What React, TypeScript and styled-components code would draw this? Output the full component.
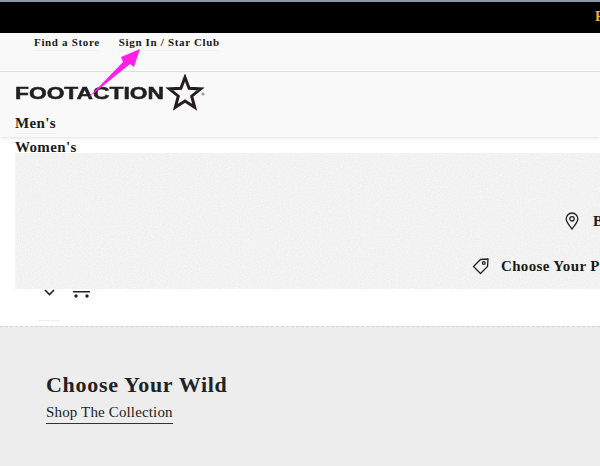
import styled, { createGlobalStyle } from "styled-components"

const GlobalStyle = createGlobalStyle`
  html, body {
    margin: 0;
    padding: 0;
    background: #fff;
    overflow: hidden;
  }

  body {
    font-family: "Liberation Serif", "Times New Roman", serif;
  }
`

const Page = styled.div`
  position: relative;
  width: 600px;
  height: 466px;
  overflow: hidden;
`

const PromoBar = styled.div`
  height: 31px;
  border-top: 2px solid #8b98a8;
  background: #000;
  color: #f5b818;
  font-size: 14px;
  font-weight: 700;
  line-height: 30px;
  padding-left: 595px;
  white-space: nowrap;
`

const Header = styled.header`
  background: #f9f9f9;
  box-shadow: 0 1px 3px rgba(0, 0, 0, 0.12);
`

const UtilityBar = styled.nav`
  display: flex;
  align-items: flex-start;
  gap: 19px;
  height: 39px;
  padding: 2px 0 0 34px;
  box-sizing: border-box;
  border-bottom: 1px solid #dedede;
`

const UtilityLink = styled.a`
  font-size: 11px;
  font-weight: 700;
  letter-spacing: 0.66px;
  line-height: 14px;
  color: #1a1a1a;
  padding-bottom: 1px;
  border-bottom: 1px solid #f0f0f0;
`

const LogoRow = styled.div`
  display: flex;
  align-items: center;
  height: 41px;
  padding-left: 15px;
`

const LogoText = styled.span`
  font-family: "Liberation Sans", Arial, sans-serif;
  font-size: 17px;
  font-weight: 700;
  line-height: 17px;
  color: #231f20;
  display: inline-block;
  width: 150px;
  white-space: nowrap;
  transform: scaleX(1.34);
  transform-origin: left center;
  -webkit-text-stroke: 0.5px #231f20;
  margin-top: 2px;
`

const NavLink = styled.a`
  display: inline-block;
  font-size: 15px;
  font-weight: 700;
  letter-spacing: 0.35px;
  line-height: 18px;
  color: #1a1a1a;
`

const NavRow = styled.div`
  height: 24px;
  padding: 1px 0 0 15px;
  box-sizing: border-box;

  ${NavLink} {
    border-bottom: 1px solid #efefef;
    padding-bottom: 1px;
  }
`

const WomenRow = styled.div`
  height: 22px;
  padding: 1px 0 0 15px;
  line-height: 18px;
`

const PickerPanel = styled.div`
  position: absolute;
  left: 15px;
  top: 153px;
  width: 585px;
  height: 136px;
  background-color: #efefef;
  overflow: hidden;
`

const Grain = styled.svg`
  position: absolute;
  inset: 0;
  width: 100%;
  height: 100%;
`

const PickerItem = styled.div<{ $left: number; $top: number }>`
  position: absolute;
  left: ${(p) => p.$left}px;
  top: ${(p) => p.$top}px;
  display: flex;
  align-items: center;
  font-size: 15px;
  font-weight: 700;
  letter-spacing: 0.35px;
  line-height: 18px;
  color: #1a1a1a;
  white-space: nowrap;
`

const PinIcon = styled.svg`
  width: 14px;
  height: 18px;
  margin-right: 14px;
`

const TagIcon = styled.svg`
  width: 18px;
  height: 18px;
  margin-right: 11px;
`

const IconRow = styled.div`
  display: flex;
  align-items: flex-start;
  gap: 18px;
  height: 30px;
  padding: 130px 0 0 44px;
`

const Chevron = styled.svg`
  width: 11px;
  height: 8px;
  margin-top: -1px;
`

const Cart = styled.svg`
  width: 18px;
  height: 18px;
`

const ThinRule = styled.div`
  width: 22px;
  height: 1px;
  margin: 0 0 5px 38px;
  background: #eee;
`

const Feature = styled.section`
  height: 141px;
  background: #ededed;
  border-top: 1px dashed #d2d2d2;
  padding: 45px 0 0 46px;
  box-sizing: border-box;
`

const FeatureTitle = styled.h2`
  margin: 0;
  font-size: 22px;
  font-weight: 700;
  letter-spacing: 0.7px;
  line-height: 26px;
  color: #222;
`

const FeatureLink = styled.a`
  display: inline-block;
  margin-top: 5px;
  font-size: 15px;
  letter-spacing: 0.15px;
  line-height: 18px;
  color: #222;
  padding-bottom: 2px;
  border-bottom: 1px solid #333;
`

const ArrowMark = styled.svg`
  position: absolute;
  left: 85px;
  top: 45px;
  width: 60px;
  height: 56px;
`

export default function App() {
  return (
    <Page>
      <GlobalStyle />
      <PromoBar>F</PromoBar>

      <Header>
        <UtilityBar>
          <UtilityLink>Find a Store</UtilityLink>
          <UtilityLink>Sign In / Star Club</UtilityLink>
        </UtilityBar>

        <LogoRow>
          <LogoText>FOOTACTION</LogoText>
          <svg width="42" height="38" viewBox="0 0 42 38">
            <path
              d="M20 3.5 L24.1 14.3 L35.7 14.9 L26.7 22.2 L29.7 33.3 L20 27 L10.3 33.3 L13.3 22.2 L4.3 14.9 L15.9 14.3 Z"
              fill="none"
              stroke="#231f20"
              strokeWidth="3"
            />
            <circle cx="38" cy="20" r="1.5" fill="#999" />
          </svg>
        </LogoRow>

        <NavRow>
          <NavLink>Men's</NavLink>
        </NavRow>
      </Header>

      <WomenRow>
        <NavLink>Women's</NavLink>
      </WomenRow>

      <PickerPanel>
        <Grain>
          <filter id="grain">
            <feTurbulence type="fractalNoise" baseFrequency="0.9" numOctaves="2" />
            <feColorMatrix values="0 0 0 0 1  0 0 0 0 1  0 0 0 0 1  0 0 0 1.2 -0.4" />
          </filter>
          <rect width="100%" height="100%" filter="url(#grain)" />
        </Grain>
        <PickerItem $left={550} $top={59}>
          <PinIcon viewBox="0 0 14 18" fill="none" stroke="#222" strokeWidth="1.3">
            <path d="M7 17 C4 13 1.2 10 1.2 6.8 A5.8 5.8 0 0 1 12.8 6.8 C12.8 10 10 13 7 17 Z" />
            <circle cx="7" cy="6.8" r="2.2" />
          </PinIcon>
          B
        </PickerItem>
        <PickerItem $left={457} $top={104}>
          <TagIcon viewBox="0 0 18 18" fill="none" stroke="#222" strokeWidth="1.3">
            <path d="M1.5 9.5 L8.5 2.5 L16 2 L15.5 9.5 L8.5 16.5 Z" />
            <circle cx="11.8" cy="6" r="1.4" />
          </TagIcon>
          Choose Your Pick
        </PickerItem>
      </PickerPanel>

      <IconRow>
        <Chevron viewBox="0 0 11 8" fill="none" stroke="#222" strokeWidth="1.6">
          <path d="M1 1 L5.5 5.5 L10 1" />
        </Chevron>
        <Cart viewBox="0 0 18 18" fill="#222">
          <rect x="0" y="1" width="17" height="1.5" />
          <circle cx="3" cy="6" r="1.7" />
          <circle cx="14" cy="6" r="1.7" />
        </Cart>
      </IconRow>

      <ThinRule />

      <Feature>
        <FeatureTitle>Choose Your Wild</FeatureTitle>
        <FeatureLink>Shop The Collection</FeatureLink>
      </Feature>

      <ArrowMark viewBox="0 0 60 56">
        <path d="M3 53 L38 17 L36 12 L55 4 L49 22 L45 19 Z" fill="#ff1fe8" />
      </ArrowMark>
    </Page>
  )
}
